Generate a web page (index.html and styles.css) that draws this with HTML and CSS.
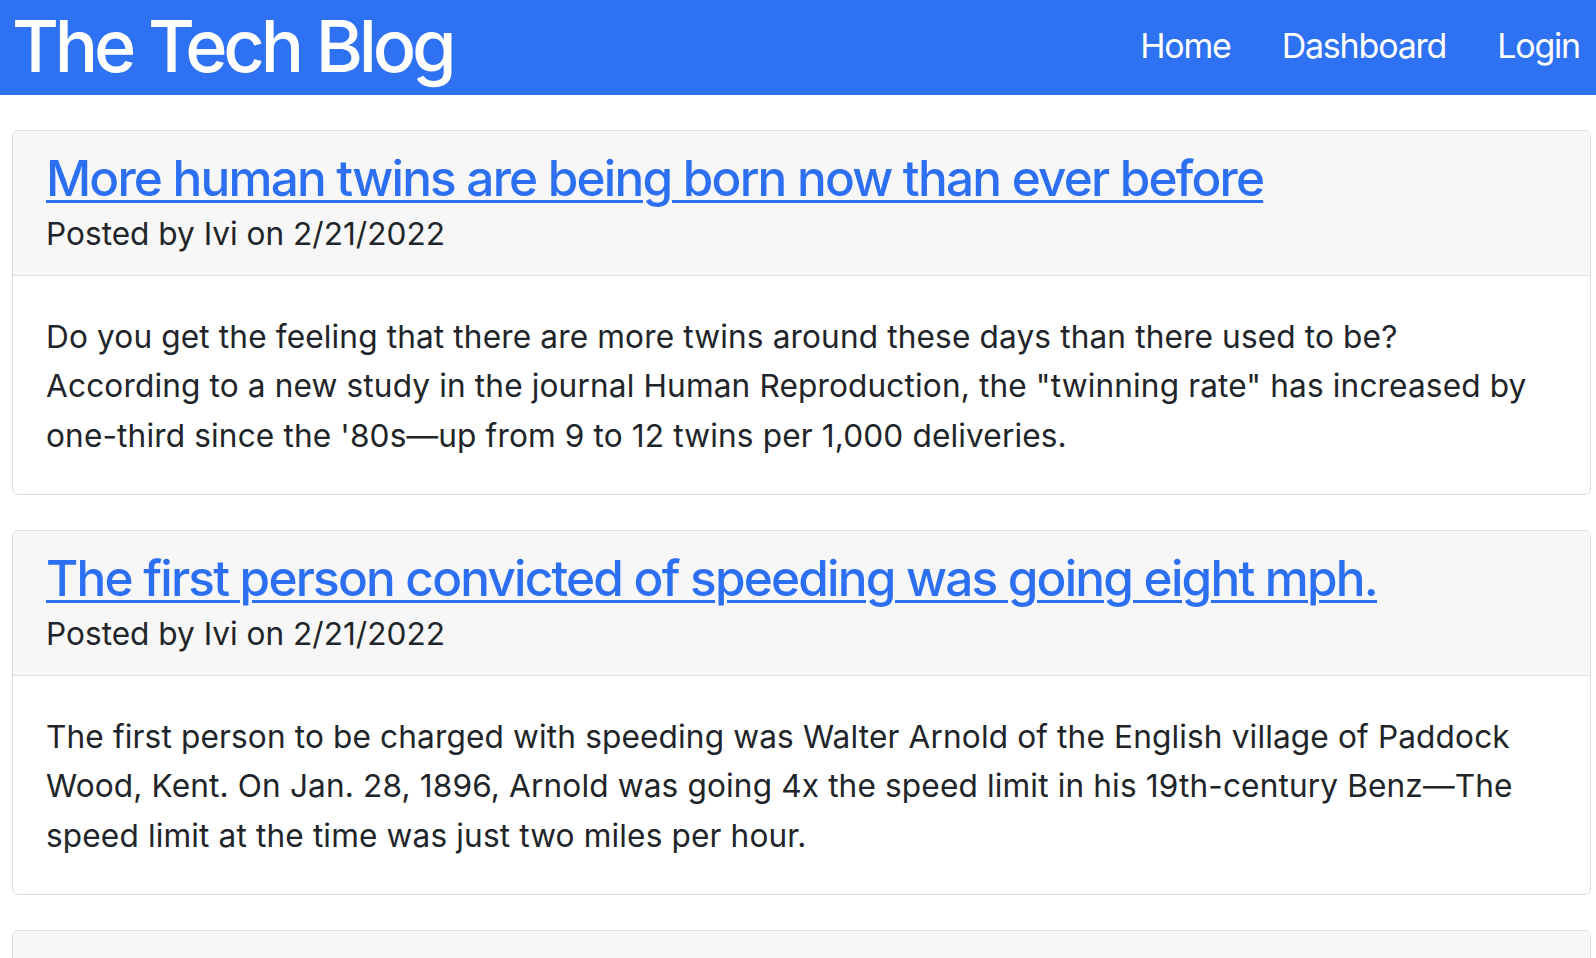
FILE: index.html
```html
<!DOCTYPE html>
<html lang="en">
<head>
<meta charset="utf-8">
<title>The Tech Blog</title>
<link rel="stylesheet" href="styles.css">
</head>
<body>
<header class="topbar">
  <h1 class="brand">The Tech Blog</h1>
  <nav class="nav">
    <a class="nav-link" href="#">Home</a>
    <a class="nav-link" href="#">Dashboard</a>
    <a class="nav-link" href="#">Login</a>
  </nav>
</header>
<main class="posts">
  <article class="card">
    <div class="card-header">
      <h2 class="post-title"><a href="#">More human twins are being born now than ever before</a></h2>
      <p class="post-meta">Posted by Ivi on 2/21/2022</p>
    </div>
    <div class="card-body">
      <p class="post-text">Do you get the feeling that there are more twins around these days than there used to be?<br>According to a new study in the journal Human Reproduction, the "twinning rate" has increased by<br>one-third since the '80s—up from 9 to 12 twins per 1,000 deliveries.</p>
    </div>
  </article>
  <article class="card">
    <div class="card-header">
      <h2 class="post-title"><a href="#">The first person convicted of speeding was going eight mph.</a></h2>
      <p class="post-meta">Posted by Ivi on 2/21/2022</p>
    </div>
    <div class="card-body">
      <p class="post-text">The first person to be charged with speeding was Walter Arnold of the English village of Paddock<br>Wood, Kent. On Jan. 28, 1896, Arnold was going 4x the speed limit in his 19th-century Benz—The<br>speed limit at the time was just two miles per hour.</p>
    </div>
  </article>
  <article class="card">
    <div class="card-header card-header-empty"></div>
  </article>
</main>
</body>
</html>
```
FILE: styles.css
```css
html, body {
  margin: 0;
  padding: 0;
  background: #ffffff;
}

body {
  font-family: "Inter", "Roboto", "Liberation Sans", sans-serif;
  color: #212529;
  overflow: hidden;
}

.topbar {
  display: flex;
  justify-content: space-between;
  align-items: flex-start;
  height: 95px;
  background: #2e71f3;
  padding: 0 16px 0 12px;
  box-sizing: border-box;
}

.brand {
  margin: 0;
  padding-top: 2px;
  font-size: 72px;
  line-height: 88px;
  font-weight: 500;
  letter-spacing: -4.2px;
  word-spacing: 1px;
  color: #ffffff;
}

.nav {
  display: flex;
  gap: 51px;
  padding-top: 21px;
}

.nav-link {
  font-size: 34px;
  line-height: 50px;
  letter-spacing: -1.2px;
  color: #ffffff;
  text-decoration: none;
}

.posts {
  padding: 35px 5px 0 12px;
}

.card {
  border: 1px solid #dedede;
  border-radius: 6px;
  margin-bottom: 35px;
  overflow: hidden;
}

.card-header {
  background: #f7f7f7;
  border-bottom: 1px solid #dedede;
  padding: 17px 33px 16px;
}

.card-header-empty {
  height: 120px;
}

.post-title {
  margin: 0;
  font-size: 49.5px;
  line-height: 61px;
  font-weight: 500;
  letter-spacing: -1.8px;
}

.post-title a {
  color: #2c6ff3;
  text-decoration: underline;
  text-decoration-thickness: 3px;
  text-underline-offset: 4px;
}

.post-meta,
.post-text {
  margin: 0;
  font-size: 31.6px;
  line-height: 49.5px;
}

.post-meta {
  letter-spacing: 0;
}

.post-text {
  letter-spacing: 0.14px;
}

.card-body {
  padding: 36px 33px 34px;
}
```
